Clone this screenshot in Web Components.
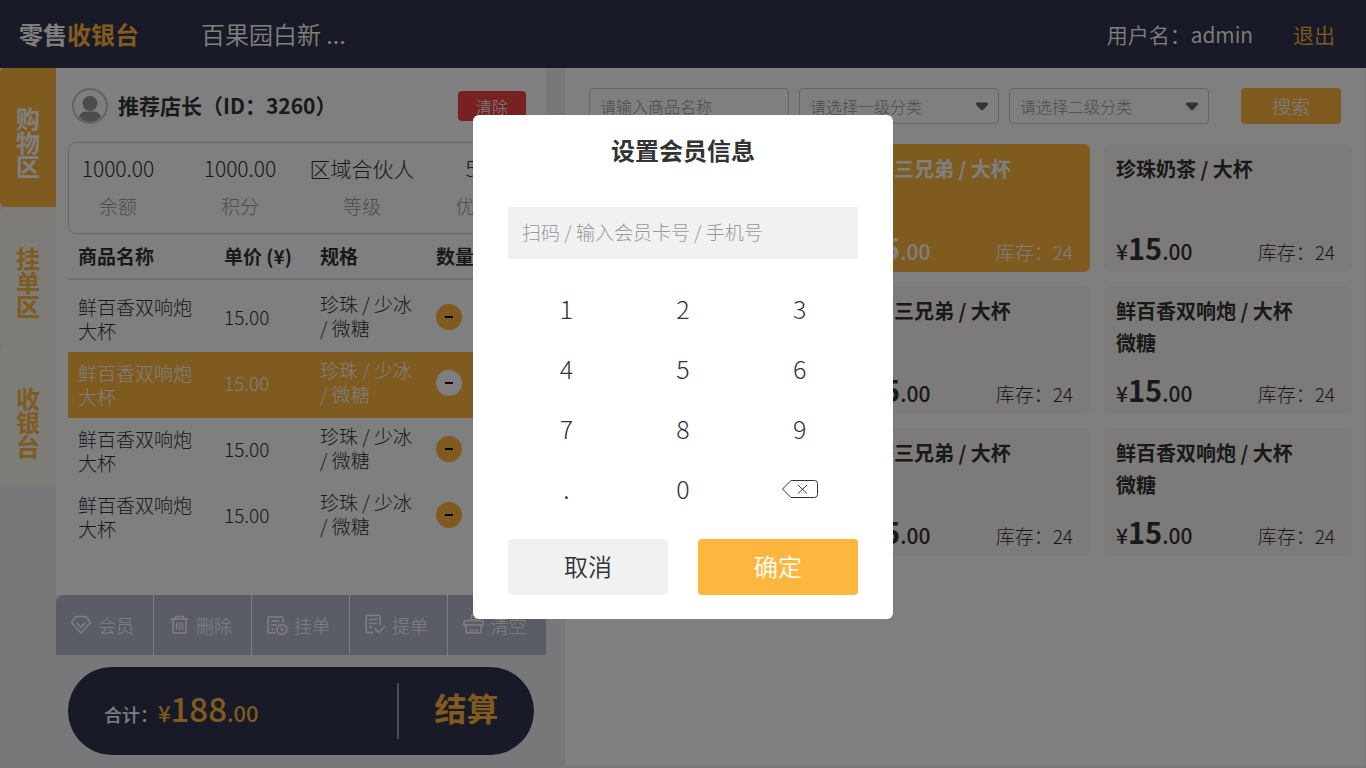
<!DOCTYPE html>
<html lang="zh-CN">
<head>
<meta charset="utf-8">
<meta name="viewport" content="width=device-width,initial-scale=1">
<title>零售收银台</title>
<style>
html,body{height:100%;margin:0}
body{
	--gold:#ffb63e;
	--navy:#33354f;
	--ground:#f0f0f5;
	--ink:#333;
	--muted:#999;
	--line:#ccc;
	font-family:"Noto Sans CJK SC","Noto Sans",sans-serif;
	font-weight:300;
	color:var(--ink);
	background:var(--ground);
	overflow:hidden;
}
</style>
</head>
<body>
<pos-app></pos-app>

<script>
(function() {
	const reset = `
		*{box-sizing:border-box}
		h1,h2,h3,p,ul,dl,dd,dt,nav{margin:0;padding:0}
		ul{list-style:none}
		button,input,select{font:inherit;color:inherit;margin:0;padding:0;border:0;border-radius:0;background:none;outline:0}
		button,select{cursor:pointer}
		a{color:inherit;text-decoration:none}
		svg{display:block;fill:none;stroke:currentColor}
	`;

	class PosElement extends HTMLElement {
		constructor() {
			super();

			this.attachShadow({mode: 'open'});
		}

		connectedCallback() {
			const template = document.createElement('template');

			template.innerHTML = `<style>${reset}${this.styles}</style>${this.markup}`;
			this.shadowRoot.replaceChildren(template.content.cloneNode(true));
		}

		get styles() {
			return '';
		}

		get markup() {
			return '<slot></slot>';
		}
	}

	//top bar
	class PosHeader extends PosElement {
		get styles() {
			return `
				:host{display:block;background:var(--navy);color:#fff;font-weight:350;position:relative;z-index:1}
				header{display:flex;align-items:center;height:68px;padding:0 31px 1px 19px}
				h1{font-size:24px;line-height:36px;font-weight:700}
				h1 em{font-style:normal;color:var(--gold)}
				.shop{margin-left:62px;font-size:24px;line-height:36px}
				.user{margin-left:auto;font-size:21px;line-height:36px}
				a{margin-left:40px;font-size:21px;line-height:36px;color:var(--gold)}
			`;
		}

		get markup() {
			return `
				<header>
					<h1>零售<em>收银台</em></h1>
					<span class="shop">${this.getAttribute('shop')}</span>
					<span class="user">用户名：${this.getAttribute('user')}</span>
					<a href="#logout">退出</a>
				</header>
			`;
		}
	}

	//vertical area tabs
	class PosRail extends PosElement {
		get styles() {
			return `
				:host{display:block;width:56px;margin-top:-1px}
				button{display:block;width:56px;height:140px;padding:39px 16px 29px;border-radius:6px 0 0 6px;background:#fbf8f0;color:var(--gold);font-size:24px;line-height:24px;font-weight:700;white-space:normal}
				button[aria-current]{background:var(--gold);color:#fff}
			`;
		}

		get markup() {
			return `
				<nav>
					<button type="button" aria-current="page">购物区</button>
					<button type="button">挂单区</button>
					<button type="button">收银台</button>
				</nav>
			`;
		}
	}

	//member card
	class PosMember extends PosElement {
		get styles() {
			return `
				:host{display:block}
				.who{display:flex;align-items:center;height:36px;margin:0 8px 18px 4px}
				.who svg{width:36px;height:36px;flex:none}
				h2{margin-left:10px;padding-bottom:2px;font-size:21px;line-height:34px;font-weight:700}
				button{width:68px;height:30px;margin-left:auto;border-radius:4px;background:#f04347;color:#fff;font-size:16px;line-height:30px}
				dl{display:flex;justify-content:space-between;height:92px;padding:7px 3px;border:1px solid var(--line);border-radius:8px}
				dl div{display:flex;flex-direction:column-reverse;justify-content:flex-end;align-items:center;width:92px;white-space:nowrap}
				dt{font-size:19px;line-height:40px;color:var(--muted)}
				dd{font-size:21px;line-height:36px}
			`;
		}

		get markup() {
			return `
				<div class="who">
					<svg viewBox="0 0 36 36" aria-hidden="true">
						<circle cx="18" cy="18" r="17" stroke="#c8c8c8" stroke-width="2"/>
						<circle cx="18" cy="15.500" r="7.500" fill="#999" stroke="none"/>
						<path d="M7 28.500c1.600-3.700 4-5 7-5h8c3 0 5.400 1.300 7 5A15.300 15.300 0 0 1 18 34 15.300 15.300 0 0 1 7 28.500z" fill="#999" stroke="none"/>
					</svg>
					<h2>推荐店长（ID：3260）</h2>
					<button type="button">清除</button>
				</div>
				<dl>
					<div><dt>余额</dt><dd>1000.00</dd></div>
					<div><dt>积分</dt><dd>1000.00</dd></div>
					<div><dt>等级</dt><dd>区域合伙人</dd></div>
					<div><dt>优惠券</dt><dd>5 张</dd></div>
				</dl>
			`;
		}
	}

	//order lines
	class PosCart extends PosElement {
		get styles() {
			return `
				:host{display:block}
				table{width:100%;border-collapse:separate;border-spacing:0;table-layout:fixed}
				th{height:46px;padding:0;border-bottom:2px solid #e6e6e6;font-size:19px;line-height:44px;font-weight:700;text-align:left;white-space:nowrap}
				td{height:66px;padding:0 0 4px;font-size:19px;line-height:24px;vertical-align:middle}
				th:first-child,td:first-child{width:156px;padding-left:10px}
				th:nth-child(2),td:nth-child(2){width:96px}
				th:nth-child(3),td:nth-child(3){width:116px}
				td:first-child{padding:0 30px 0 10px}
				td:nth-child(3){padding:0 20px 6px 0}
				.space td{height:6px;padding:0}
				.active{background:var(--gold);color:#fff}
				.qty{display:flex;align-items:center;gap:12px}
				.qty button{width:26px;height:26px;border-radius:50%;background:var(--gold);color:#000}
				.active .qty button{background:#fff}
				.qty svg{width:26px;height:26px;stroke-width:2}
			`;
		}

		get markup() {
			const active = Number(this.getAttribute('active'));
			const rows = [0, 1, 2, 3].map(
				(idx) => `
					<tr${idx === active ? ' class="active"' : ''}>
						<td>鲜百香双响炮大杯</td>
						<td>15.00</td>
						<td>珍珠 / 少冰 / 微糖</td>
						<td>
							<div class="qty">
								<button type="button" aria-label="减少"><svg viewBox="0 0 26 26"><path d="M9 13h8"/></svg></button>
								<span>1</span>
								<button type="button" aria-label="增加"><svg viewBox="0 0 26 26"><path d="M9 13h8M13 9v8"/></svg></button>
							</div>
						</td>
					</tr>
				`
			);

			return `
				<table>
					<thead><tr><th>商品名称</th><th>单价 (¥)</th><th>规格</th><th>数量</th></tr></thead>
					<tbody><tr class="space"><td colspan="4"></td></tr>${rows.join('')}</tbody>
				</table>
			`;
		}
	}

	//order actions
	const tools = [
		['会员', '<path d="M6 2.500h10l4.500 6L11 19 1.500 8.500zM6.500 8.500l4.500 5 4.500-5"/>'],
		['删除', '<path d="M2.500 5h18M7.500 5V2.500h8V5M5 5v12.500q0 1.500 1.500 1.500h10q1.500 0 1.500-1.500V5M8.500 8.500v7M11.500 8.500v7M14.500 8.500v7"/>'],
		['挂单', '<path d="M9.500 19H3.500q-1.500 0-1.500-1.500v-13Q2 3 3.500 3h12Q17 3 17 4.500V9M5.500 7h8M5.500 11h5M5.500 15h3"/><circle cx="16" cy="15.500" r="5"/><path d="M15.500 12.500v3.500h3"/>'],
		['提单', '<path d="M9 18.500H3.500q-1.500 0-1.500-1.500V3q0-1.500 1.500-1.500h11Q16 1.500 16 3v8M5 5.500h8M5 9.500h8M5 13h3M11 14.500l4 4 6-6.500"/>'],
		['清空', '<path d="M8.500 6.500V2.500q0-2 2-2t2 2v4M3 6.500h15q2 0 2 2V11H1V8.500q0-2 2-2zM3 11v6.500Q3 19 4.500 19h12q1.500 0 1.500-1.500V11M7.500 19v-4M10.500 19v-4M13.500 19v-4"/>']
	];

	class PosToolbar extends PosElement {
		get styles() {
			return `
				:host{display:block}
				div{display:grid;grid-template-columns:repeat(5,1fr);height:60px;border-radius:8px 0 0;background:#b5bbca;overflow:hidden}
				button{display:flex;align-items:center;justify-content:center;gap:6px;padding-right:5px;color:#fff;border-right:1px solid #fff;font-size:18px;line-height:60px}
				button:last-child{border-right:0}
				svg{width:22px;height:22px;stroke-width:1.500}
			`;
		}

		get markup() {
			const buttons = tools.map(
				([label, shape]) => `<button type="button"><svg viewBox="0 0 22 22" aria-hidden="true">${shape}</svg>${label}</button>`
			);

			return `<div>${buttons.join('')}</div>`;
		}
	}

	//total and pay
	class PosCheckout extends PosElement {
		get styles() {
			return `
				:host{display:block}
				div{display:flex;align-items:center;height:88px;padding:0 0 0 36px;border-radius:44px;background:var(--navy);color:#fff}
				p{flex:1;font-size:18px;line-height:48px;font-weight:500;white-space:nowrap}
				span{color:var(--gold);font-size:22px}
				b{font-size:33px;font-weight:500}
				button{width:137px;height:56px;padding-bottom:8px;border-left:2px solid var(--muted);color:var(--gold);font-size:32px;line-height:48px;font-weight:700}
			`;
		}

		get markup() {
			return `
				<div>
					<p>合计：<span>¥<b>188</b>.00</span></p>
					<button type="button">结算</button>
				</div>
			`;
		}
	}

	//product search
	class PosFilter extends PosElement {
		get styles() {
			return `
				:host{display:block}
				form{display:flex;gap:10px;padding:0 11px 0 9px}
				input,select{flex:0 1 200px;width:200px;min-width:0;height:36px;padding:0 10px 1px;border:1px solid var(--line);border-radius:4px;font-size:16px;color:var(--muted)}
				input::placeholder{color:var(--muted);opacity:1}
				select{appearance:none;background:url("data:image/svg+xml,%3Csvg xmlns='http://www.w3.org/2000/svg' width='14' height='9'%3E%3Cpath d='M2 1h10q1.500 .5.600 1.500L8 7.500q-1 .8-2 0L1.400 2.500Q.5 1.500 2 1z' fill='%23666' stroke='%23666'/%3E%3C/svg%3E") no-repeat right 9px center}
				button{width:100px;height:36px;margin-left:auto;border-radius:4px;background:var(--gold);color:#fff;font-size:19px;line-height:36px}
			`;
		}

		get markup() {
			return `
				<form>
					<input type="text" aria-label="商品名称" placeholder="请输入商品名称">
					<select aria-label="一级分类"><option>请选择一级分类</option></select>
					<select aria-label="二级分类"><option>请选择二级分类</option></select>
					<button type="button">搜索</button>
				</form>
			`;
		}
	}

	//product tile, blank while it has no stock
	class PosProduct extends PosElement {
		get styles() {
			return `
				:host{display:flex;flex-direction:column;justify-content:space-between;min-width:0;height:128px;padding:9px 17px 2px 12px;border-radius:6px;background:#f8f7f2;box-sizing:border-box}
				:host([selected]){background:var(--gold);color:#fff}
				h3{padding-right:24px;font-size:20px;line-height:32px;font-weight:700}
				div{display:flex;justify-content:space-between;align-items:baseline;white-space:nowrap;line-height:36px}
				strong{font-size:21px;font-weight:500}
				b{font-size:29px;font-weight:700}
				span{font-size:19px}
			`;
		}

		get markup() {
			if (!this.hasAttribute('stock')) return '';

			return `
				<h3><slot></slot></h3>
				<div><strong>¥<b>15</b>.00</strong><span>库存：${this.getAttribute('stock')}</span></div>
			`;
		}
	}

	//number pad
	class PosKeypad extends PosElement {
		get styles() {
			return `
				:host{display:grid;grid-template-columns:repeat(3,1fr);grid-auto-rows:60px}
				button{display:flex;align-items:center;justify-content:center;padding-bottom:2px;font-size:25px;line-height:58px}
				.back{padding:0}
				svg{width:36px;height:18px}
			`;
		}

		get markup() {
			const keys = ['1', '2', '3', '4', '5', '6', '7', '8', '9', '.', '0'].map(
				(key) => `<button type="button">${key}</button>`
			);

			return `
				${keys.join('')}
				<button type="button" class="back" aria-label="退格">
					<svg viewBox="0 0 36 18"><path d="M9 .5h23.500q3 0 3 3v11q0 3-3 3H9L.5 9zM16 5l9 8.500M25 5l-9 8.500"/></svg>
				</button>
			`;
		}
	}

	//member lookup dialog
	class PosModal extends PosElement {
		get styles() {
			return `
				:host{position:fixed;inset:0;z-index:10;display:flex;align-items:flex-start;justify-content:center;padding-top:115px;background:rgba(0,0,0,.5);box-sizing:border-box}
				section{width:420px;padding:17px 35px 24px;border-radius:6px;background:#fff}
				h2{margin-bottom:39px;font-size:24px;line-height:36px;font-weight:700;text-align:center}
				input{display:block;width:100%;height:52px;margin-bottom:20px;padding:0 14px 4px;background:#f1f1f1;font-size:19px}
				input::placeholder{color:var(--muted);opacity:1}
				.act{display:flex;gap:30px;margin-top:20px}
				.act button{flex:1;height:56px;padding-bottom:2px;border-radius:4px;background:#f1f1f1;font-size:24px;line-height:54px;font-weight:350}
				.act .ok{background:var(--gold);color:#fff}
			`;
		}

		get markup() {
			return `
				<section role="dialog" aria-modal="true" aria-labelledby="title">
					<h2 id="title">${this.getAttribute('heading')}</h2>
					<input type="text" aria-labelledby="title" placeholder="扫码 / 输入会员卡号 / 手机号">
					<slot></slot>
					<div class="act">
						<button type="button">取消</button>
						<button type="button" class="ok">确定</button>
					</div>
				</section>
			`;
		}
	}

	const products = [
		['', '奶茶三兄弟 / 大杯', '珍珠奶茶 / 大杯'],
		['', '奶茶三兄弟 / 大杯', '鲜百香双响炮 / 大杯 微糖'],
		['', '奶茶三兄弟 / 大杯', '鲜百香双响炮 / 大杯 微糖']
	].flat();

	class PosApp extends PosElement {
		get styles() {
			return `
				:host{display:flex;flex-direction:column;height:100vh}
				main{flex:1;display:flex;min-height:0}
				.order{flex:none;width:490px;display:flex;flex-direction:column}
				.sheet{flex:1;padding:20px 12px 0;background:#fff}
				pos-checkout{margin:12px 12px 13px}
				.goods{flex:1;min-width:0;margin:0 1px 2px 19px;padding:20px 13px 0 15px;background:#fff}
				.list{display:grid;grid-template-columns:repeat(3,1fr);gap:14px;margin-top:20px}
			`;
		}

		get markup() {
			const tiles = products.map(
				(name, idx) => `<pos-product${name ? ' stock="24"' : ''}${idx === 1 ? ' selected' : ''}>${name}</pos-product>`
			);

			return `
				<pos-header shop="百果园白新 ..." user="admin"></pos-header>
				<main>
					<pos-rail></pos-rail>
					<div class="order">
						<div class="sheet">
							<pos-member></pos-member>
							<pos-cart active="1"></pos-cart>
						</div>
						<pos-toolbar></pos-toolbar>
						<pos-checkout></pos-checkout>
					</div>
					<div class="goods">
						<pos-filter></pos-filter>
						<div class="list">${tiles.join('')}</div>
					</div>
				</main>
				<pos-modal heading="设置会员信息"><pos-keypad></pos-keypad></pos-modal>
			`;
		}
	}

	//customElements define
	customElements.define('pos-header', PosHeader);
	customElements.define('pos-rail', PosRail);
	customElements.define('pos-member', PosMember);
	customElements.define('pos-cart', PosCart);
	customElements.define('pos-toolbar', PosToolbar);
	customElements.define('pos-checkout', PosCheckout);
	customElements.define('pos-filter', PosFilter);
	customElements.define('pos-product', PosProduct);
	customElements.define('pos-keypad', PosKeypad);
	customElements.define('pos-modal', PosModal);
	customElements.define('pos-app', PosApp);
})();
</script>
</body>
</html>
